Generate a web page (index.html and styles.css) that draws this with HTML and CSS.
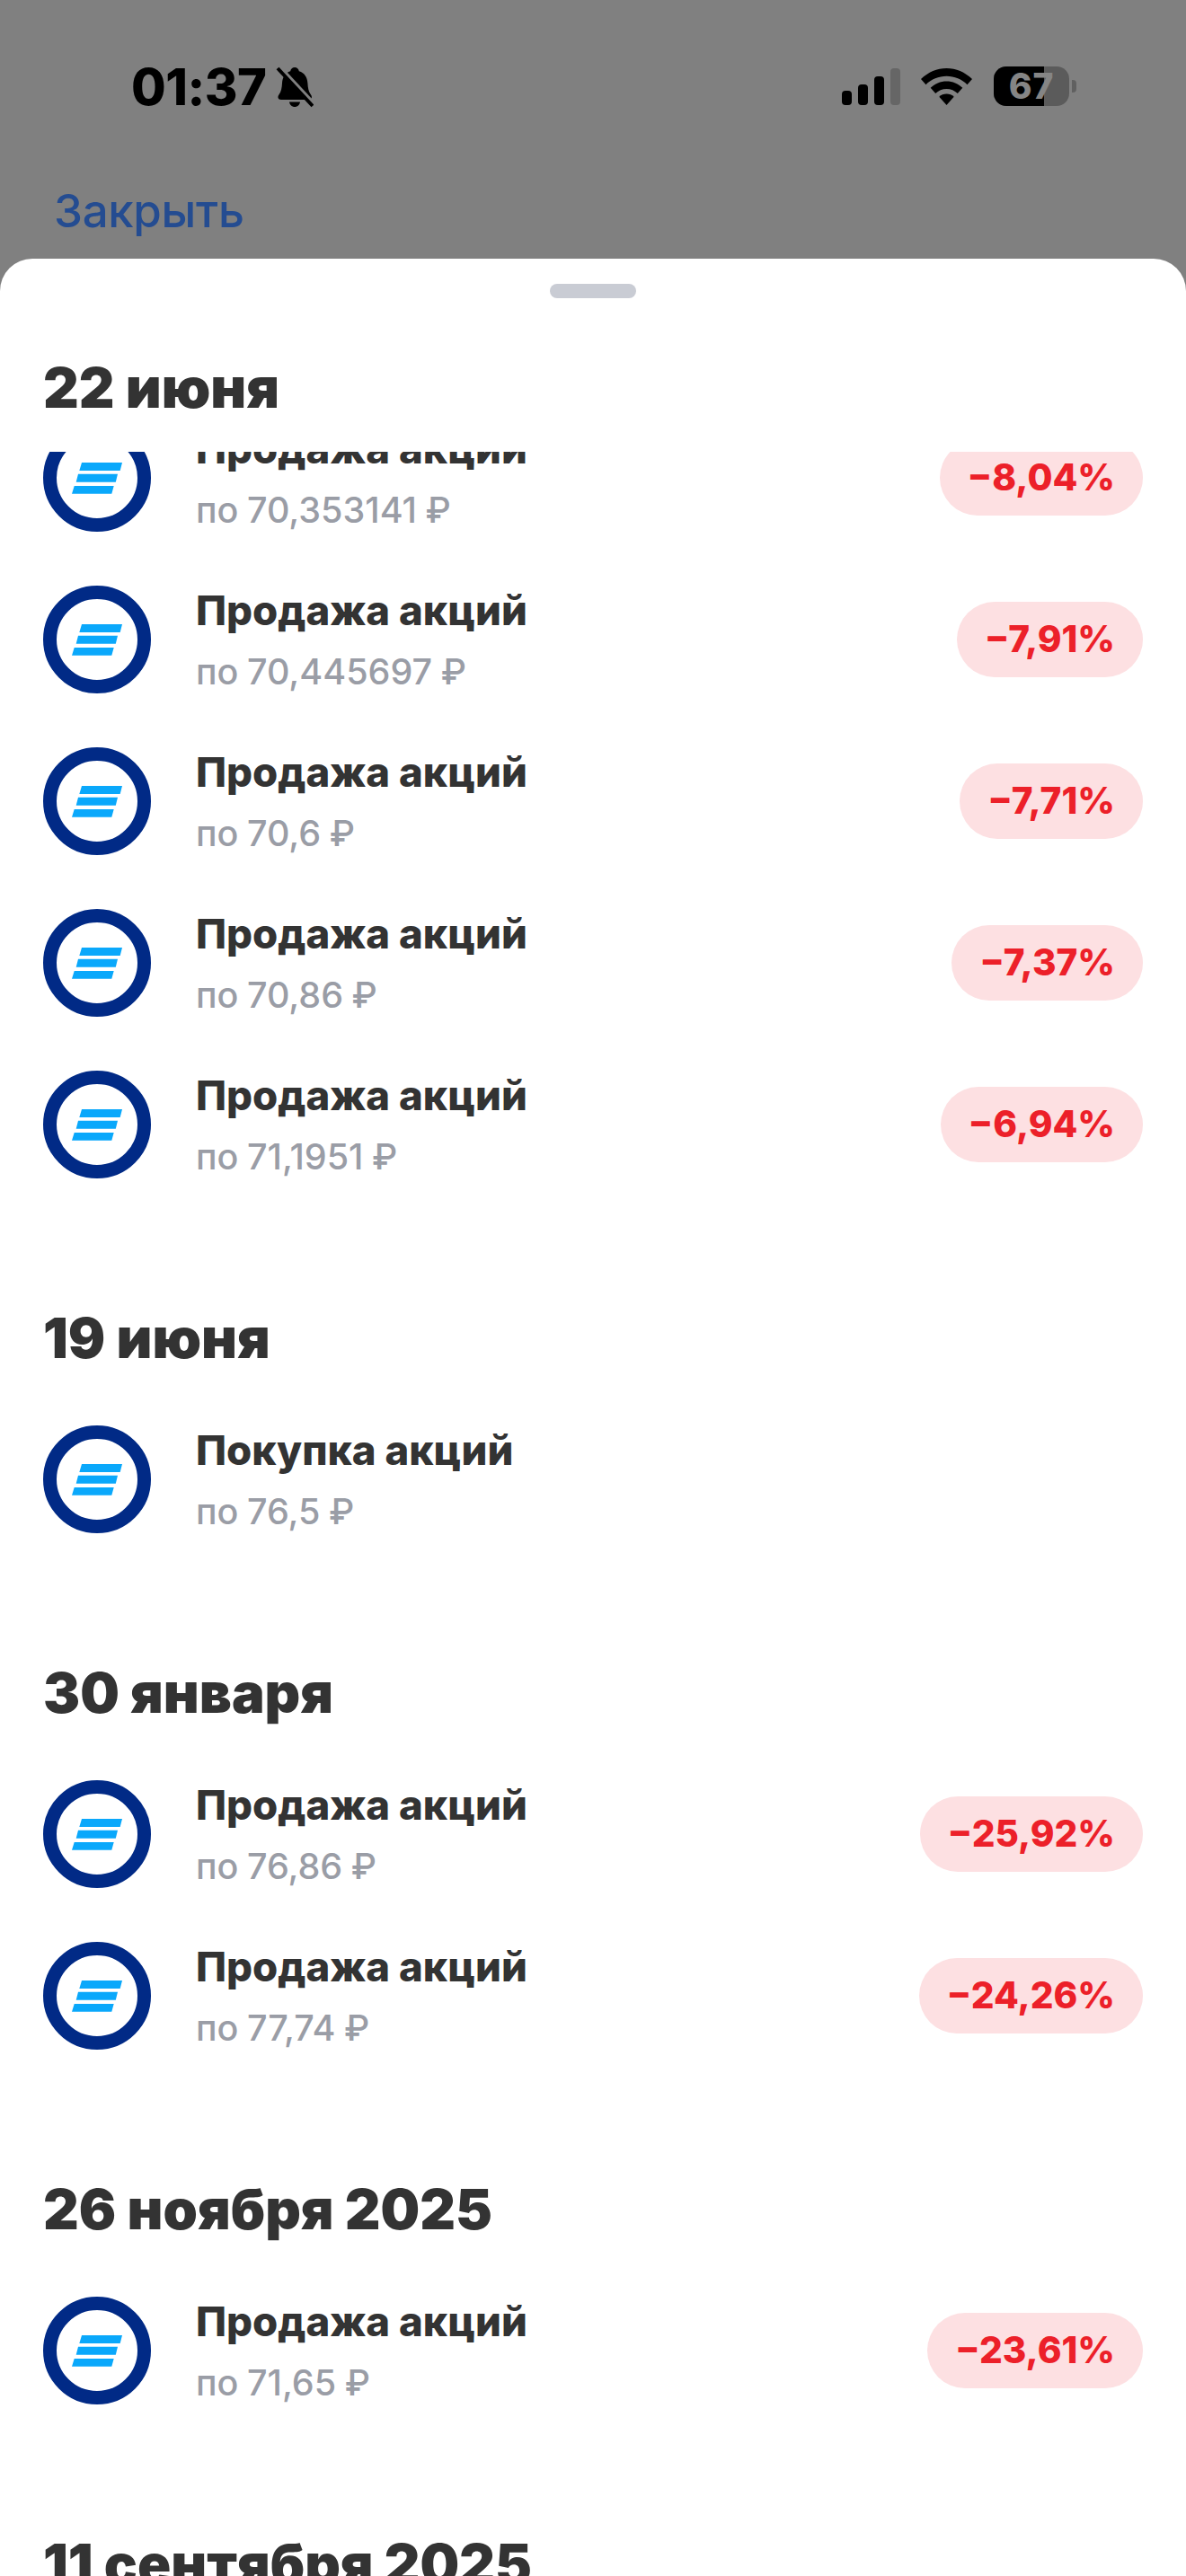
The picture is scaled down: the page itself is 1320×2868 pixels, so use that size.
FILE: index.html
```html
<!DOCTYPE html>
<html lang="ru">
<head>
<meta charset="utf-8">
<title>Операции</title>
<link rel="stylesheet" href="styles.css">
</head>
<body>
<svg class="defs" width="0" height="0" aria-hidden="true">
  <symbol id="logo" viewBox="0 0 120 120">
    <circle cx="60" cy="60" r="52.5" fill="#fff" stroke="#012a86" stroke-width="15"/>
    <path fill="#0aa8fb" d="M43 43H88L85.7 52H40.3ZM39 55.7H83L80.8 64.7H36.7ZM34.7 69H78.7L76.3 77.7H32Z"/>
  </symbol>
</svg>
<div class="screen">
  <header class="status">
    <div class="status-left">
      <span class="time">01:37</span>
      <svg class="bell" viewBox="0 0 42 46" aria-hidden="true">
        <path d="M21 1c2.6 0 4.4 1.9 4.8 4.2C32 7 35 12 35.4 18.5c.3 5.4 1 9.6 3.6 13 1.6 2 1.4 5.5-2.6 5.5H6C2 37 1.800 33.500 3.400 31.500c2.600-3.400 3.300-7.600 3.600-13C7.400 12 10.400 7 16.200 5.200 16.600 2.900 18.400 1 21 1Z"/>
        <path d="M15 39.500h12c-.5 3.400-3 5.500-6 5.500s-5.500-2.100-6-5.500Z"/>
        <path class="bell-halo" d="M2 -2 44 43"/>
        <path class="bell-slash" d="M2 2 41 44"/>
      </svg>
    </div>
    <div class="status-right">
      <div class="signal">
        <i class="bar bar-1"></i><i class="bar bar-2"></i><i class="bar bar-3"></i><i class="bar bar-4"></i>
      </div>
      <svg class="wifi" viewBox="0 0 57 41" aria-hidden="true">
        <path d="M28.500 0C39 0 49 4.300 57 12l-5.500 6.300C45.500 12.300 37.300 8.800 28.500 8.800S11.500 12.300 5.500 18.300L0 12C8 4.300 18 0 28.500 0Z"/>
        <path d="M28.500 14.500c6.800 0 13 2.700 17.800 7.300l-5.500 6.200c-3.300-3.100-7.600-5-12.300-5s-9 1.900-12.300 5l-5.500-6.200c4.800-4.600 11-7.300 17.800-7.300Z"/>
        <path d="M28.500 28.500c3.200 0 6 1.200 8.200 3.200L28.500 41l-8.200-9.300c2.200-2 5-3.200 8.200-3.200Z"/>
      </svg>
      <div class="battery">
        <div class="battery-body"><div class="battery-fill"></div><span class="battery-text">67</span></div>
        <i class="battery-nub"></i>
      </div>
    </div>
  </header>
  <nav class="topbar"><span class="close">Закрыть</span></nav>
  <main class="sheet">
    <div class="handle"></div>
    <h2 class="date date-sticky">22 июня</h2>
    <div class="list">
      <section class="group group-first">
        <div class="row"><svg class="logo"><use href="#logo"/></svg><div class="info"><div class="title">Продажа акций</div><div class="sub">по 70,353141 ₽</div></div><span class="pill">−8,04%</span></div>
        <div class="row"><svg class="logo"><use href="#logo"/></svg><div class="info"><div class="title">Продажа акций</div><div class="sub">по 70,445697 ₽</div></div><span class="pill">−7,91%</span></div>
        <div class="row"><svg class="logo"><use href="#logo"/></svg><div class="info"><div class="title">Продажа акций</div><div class="sub">по 70,6 ₽</div></div><span class="pill">−7,71%</span></div>
        <div class="row"><svg class="logo"><use href="#logo"/></svg><div class="info"><div class="title">Продажа акций</div><div class="sub">по 70,86 ₽</div></div><span class="pill">−7,37%</span></div>
        <div class="row"><svg class="logo"><use href="#logo"/></svg><div class="info"><div class="title">Продажа акций</div><div class="sub">по 71,1951 ₽</div></div><span class="pill">−6,94%</span></div>
      </section>
      <section class="group">
        <h2 class="date">19 июня</h2>
        <div class="row"><svg class="logo"><use href="#logo"/></svg><div class="info"><div class="title">Покупка акций</div><div class="sub">по 76,5 ₽</div></div></div>
      </section>
      <section class="group">
        <h2 class="date">30 января</h2>
        <div class="row"><svg class="logo"><use href="#logo"/></svg><div class="info"><div class="title">Продажа акций</div><div class="sub">по 76,86 ₽</div></div><span class="pill">−25,92%</span></div>
        <div class="row"><svg class="logo"><use href="#logo"/></svg><div class="info"><div class="title">Продажа акций</div><div class="sub">по 77,74 ₽</div></div><span class="pill">−24,26%</span></div>
      </section>
      <section class="group">
        <h2 class="date">26 ноября 2025</h2>
        <div class="row"><svg class="logo"><use href="#logo"/></svg><div class="info"><div class="title">Продажа акций</div><div class="sub">по 71,65 ₽</div></div><span class="pill">−23,61%</span></div>
      </section>
      <section class="group">
        <h2 class="date">11 сентября 2025</h2>
      </section>
    </div>
  </main>
</div>
</body>
</html>
```

FILE: styles.css
```css
* { box-sizing: border-box; }
html, body { margin: 0; padding: 0; }
body { background: #808080; font-family: Inter, "Noto Sans", sans-serif; }
.defs { display: block; height: 0; }
.screen { width: 1320px; height: 2868px; display: flex; flex-direction: column; overflow: hidden; }

.status { height: 198px; flex: none; display: flex; justify-content: space-between; align-items: flex-start; padding: 74px 122px 0 146px; }
.status-left { display: flex; align-items: center; gap: 11px; height: 46px; }
.time { font-size: 56px; font-weight: 800; line-height: 46px; color: #000; letter-spacing: -0.5px; }
.bell { width: 42px; height: 46px; fill: #000; }
.bell-halo { stroke: #808080; stroke-width: 4; fill: none; }
.bell-slash { stroke: #000; stroke-width: 4; fill: none; }
.status-right { display: flex; align-items: flex-start; }
.signal { display: flex; align-items: flex-end; gap: 7px; width: 65px; height: 41px; margin-top: 2px; }
.bar { display: block; width: 11px; background: #000; border-radius: 4px; }
.bar-1 { height: 16px; }
.bar-2 { height: 23px; }
.bar-3 { height: 32px; }
.bar-4 { height: 41px; background: #666; }
.wifi { width: 57px; height: 41px; margin: 2px 24px 0 23px; fill: #000; }
.battery { display: flex; align-items: center; height: 44px; }
.battery-body { width: 84px; height: 44px; border-radius: 14px; background: #5b5b5b; position: relative; display: flex; align-items: center; justify-content: center; }
.battery-fill { position: absolute; left: 0; top: 0; bottom: 0; width: 56px; background: #000; border-radius: 14px 0 0 14px; }
.battery-text { position: relative; font-size: 39px; font-weight: 800; line-height: 44px; color: #858585; letter-spacing: 1px; }
.battery-nub { display: block; width: 5px; height: 14px; margin-left: 3px; background: #606060; border-radius: 0 4px 4px 0; }

.topbar { height: 90px; flex: none; padding: 9px 0 0 60px; }
.close { font-size: 51px; line-height: 56px; font-weight: 500; color: #244c91; letter-spacing: -0.3px; }

.sheet { flex: 1; min-height: 0; background: #fff; border-radius: 36px 36px 0 0; display: flex; flex-direction: column; }
.handle { width: 96px; height: 16px; border-radius: 8px; background: #c9ccd4; margin: 28px auto 0; flex: none; }
.date { margin: 0; font-size: 61.5px; line-height: 80px; font-weight: 900; color: #333; padding: 0 48px; }
.date-sticky { flex: none; margin-top: 60px; height: 111px; }
.list { flex: 1; min-height: 0; overflow: hidden; }
.group { padding-top: 108px; }
.group .date { margin-bottom: 27px; }
.group-first { padding-top: 0; margin-top: -61px; }
.row { height: 180px; display: flex; align-items: center; padding: 0 48px; }
.logo { width: 120px; height: 120px; flex: none; }
.info { flex: 1; margin-left: 50px; min-width: 0; padding-top: 3px; }
.title { font-size: 45.5px; line-height: 68px; font-weight: 800; color: #333; }
.sub { font-size: 39.5px; line-height: 68px; font-weight: 500; color: #9a9da6; word-spacing: -1px; }
.pill { flex: none; height: 84px; line-height: 84px; padding: 0 31px; border-radius: 42px; background: #fde0e2; color: #ec2029; font-size: 40.5px; font-weight: 800; }
```
